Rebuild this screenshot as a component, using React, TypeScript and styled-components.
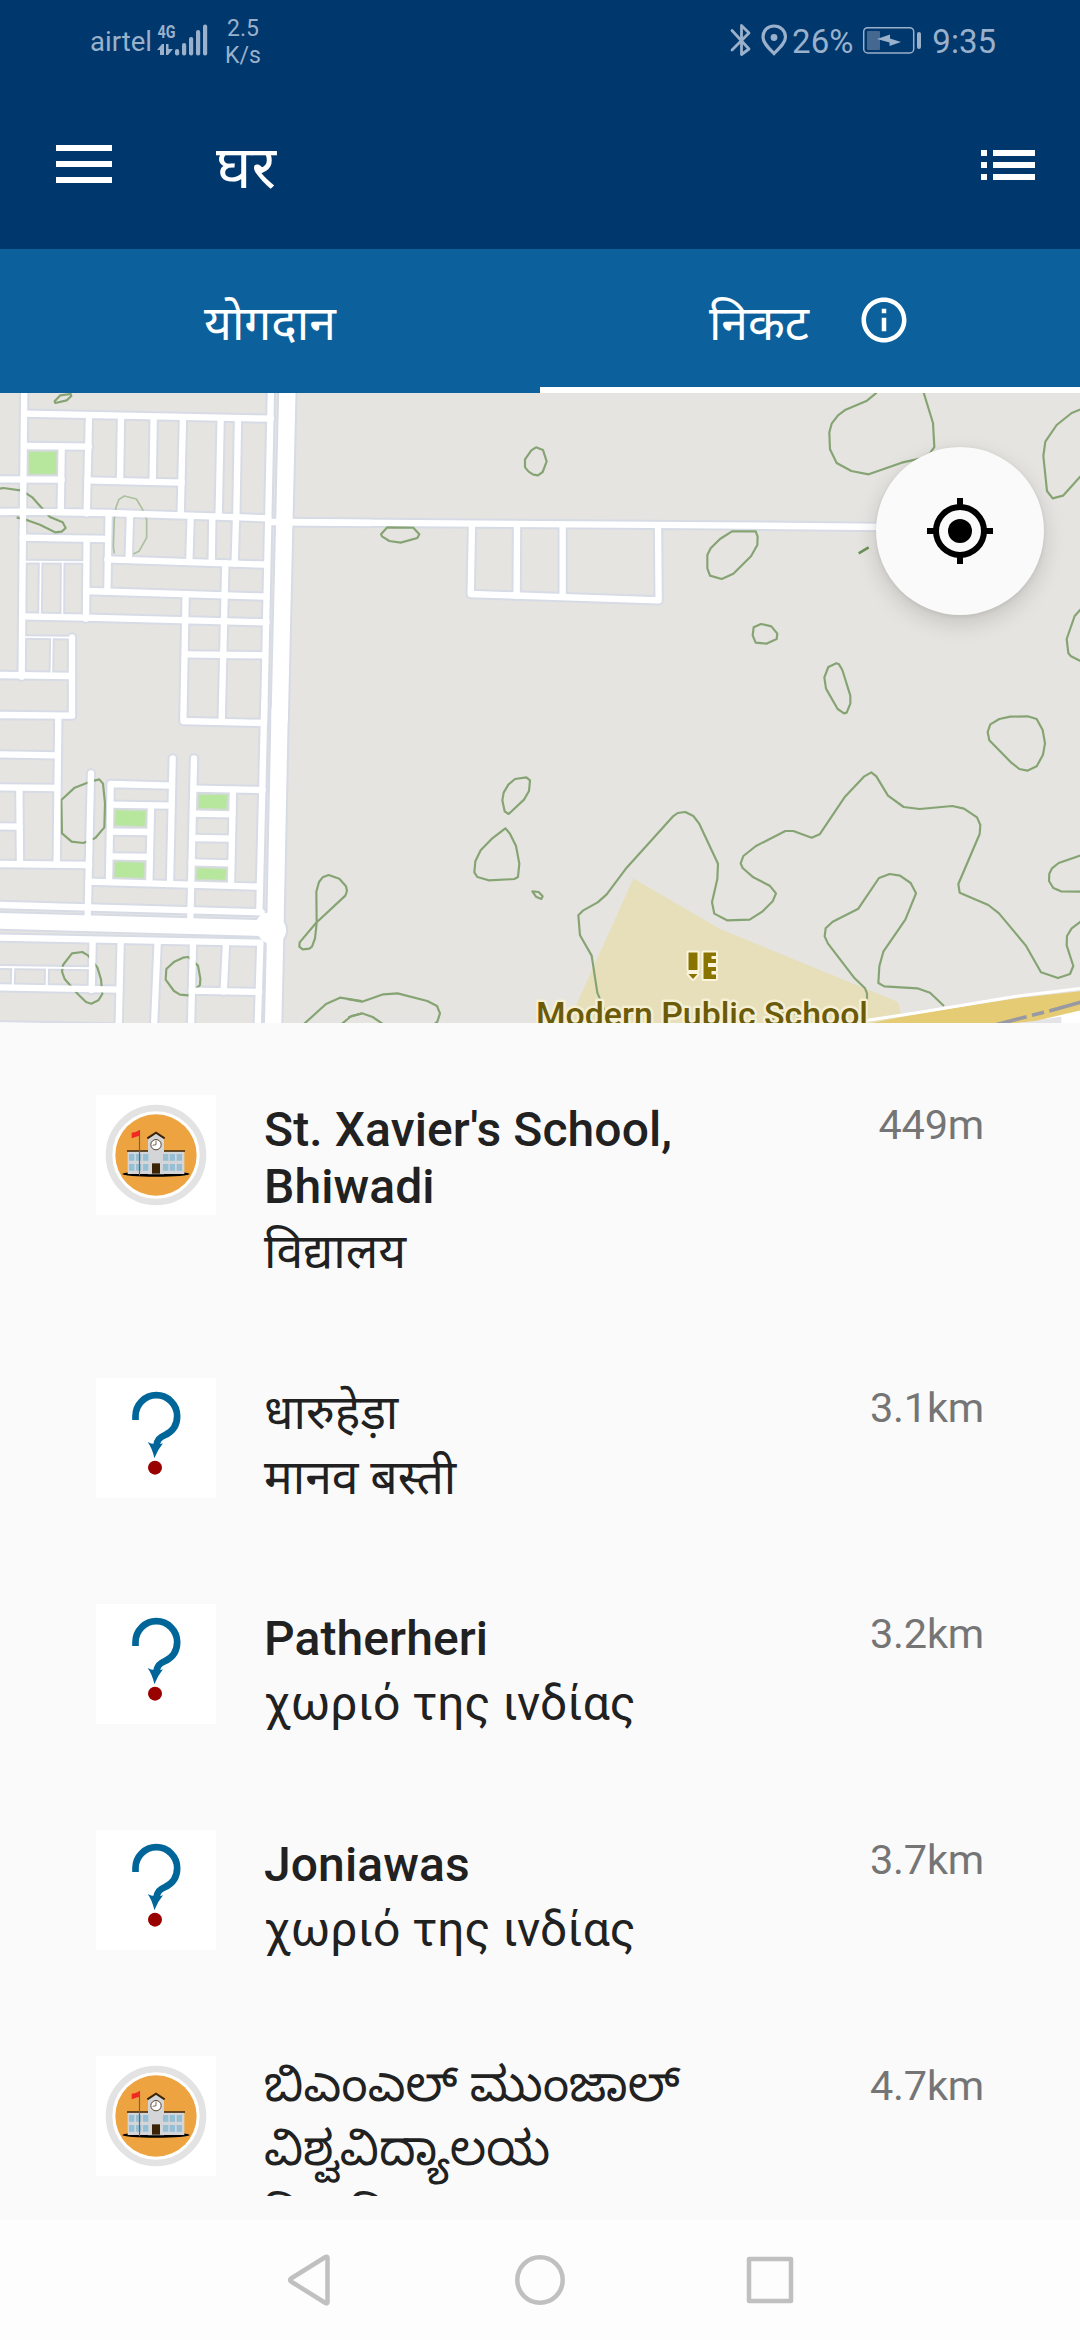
import React from "react";
import styled, { createGlobalStyle } from "styled-components";

const SANS = `Roboto, "Noto Sans", "Noto Sans Devanagari", "Noto Sans Kannada", sans-serif`;

const GlobalStyle = createGlobalStyle`
  * { box-sizing: border-box; }
  body { margin: 0; background: #fafafa; font-family: ${SANS}; }
`;

/* ---------- shell ---------- */

const Screen = styled.div`
  width: 1080px;
  height: 2340px;
  display: flex;
  flex-direction: column;
  overflow: hidden;
  background: #fafafa;
`;

const StatusBar = styled.div`
  height: 81px;
  flex: none;
  display: flex;
  justify-content: space-between;
  padding: 0 84px 0 90px;
  background: #00376c;
  color: #9ab0cb;
`;

const StatusGroup = styled.div`
  display: flex;
  align-items: flex-start;
`;

const Carrier = styled.span`
  font-size: 27.5px;
  line-height: 32px;
  margin: 26px 5px 0 0;
  width: 61px;
  white-space: nowrap;
`;

const Speed = styled.div`
  margin: 15px 0 0 17px;
  font-size: 23px;
  line-height: 27px;
  text-align: center;
  width: 36px;
`;

const StatusText = styled.span<{ $left?: number }>`
  font-size: 33px;
  line-height: 38px;
  margin: 23px 0 0 ${(p) => p.$left ?? 0}px;
  white-space: nowrap;
`;

const StatusGlyph = styled.svg<{ $left?: number }>`
  display: block;
  flex: none;
  margin: 22px 0 0 ${(p) => p.$left ?? 0}px;
`;

const AppBar = styled.header`
  height: 168px;
  flex: none;
  display: flex;
  align-items: center;
  padding: 0 45px 0 56px;
  background: #00376c;
  color: #fff;
`;

const BarIcon = styled.svg<{ $raise?: number }>`
  display: block;
  flex: none;
  margin-bottom: ${(p) => p.$raise ?? 0}px;
`;

const Title = styled.h1`
  flex: 1;
  margin: 5px 0 0 104px;
  font-size: 60px;
  line-height: 72px;
  font-weight: 400;
`;

const Tabs = styled.nav`
  height: 144px;
  flex: none;
  display: grid;
  grid-template-columns: 1fr 1fr;
  background: #0c609c;
`;

const Tab = styled.div<{ $active?: boolean }>`
  display: flex;
  align-items: center;
  justify-content: center;
  gap: 48px;
  padding-top: 6px;
  border-bottom: 6px solid ${(p) => (p.$active ? "#fff" : "transparent")};
  color: #fff;
  font-size: 48px;
  line-height: 56px;
`;

const TabLabel = styled.span`
  padding-top: 5px;
`;

/* ---------- map ---------- */

const MapArea = styled.section`
  position: relative;
  height: 630px;
  flex: none;
  background: #e5e4e0;
`;

const MapCanvas = styled.svg`
  display: block;
`;

const LocateButton = styled.button`
  position: absolute;
  top: 54px;
  right: 36px;
  width: 168px;
  height: 168px;
  border: 0;
  border-radius: 50%;
  padding: 0;
  display: flex;
  align-items: center;
  justify-content: center;
  background: #fafafa;
  box-shadow: 0 8px 22px rgba(0, 0, 0, 0.15), 0 1px 4px rgba(0, 0, 0, 0.08);
`;

type Road = { d: string; w?: number };

/* Map geometry is stored in thirds of a pixel, per map tile. */
const tiles = { nw: [0, 390], sw: [0, 710], n: [350, 390], ne: [710, 390], s: [350, 700], se: [710, 700] } as const;
type TileName = keyof typeof tiles;

const Tile = ({ at, children }: { at: TileName; children: React.ReactNode }) => (
  <g transform={`translate(${tiles[at][0]} ${tiles[at][1]}) scale(0.33333)`}>{children}</g>
);

const roads: Partial<Record<TileName, Road[]>> = {
  nw: [
    { d: "M73 -20L69 370L65 860" },
    { d: "M72 71L813 86" },
    { d: "M72 168L267 170" },
    { d: "M267 76L260 370" },
    { d: "M363 80L360 272" },
    { d: "M461 82L458 274" },
    { d: "M549 83L542 372" },
    { d: "M662 85L656 375" },
    { d: "M714 87L709 378" },
    { d: "M0 268L185 269" },
    { d: "M262 271L545 278" },
    { d: "M185 170L182 365" },
    { d: "M0 366L72 365L325 369L805 385" },
    { d: "M326 369L322 605" },
    { d: "M390 373L386 508" },
    { d: "M68 443L322 447" },
    { d: "M260 447L258 686" },
    { d: "M322 508L800 524" },
    { d: "M572 380L568 515" },
    { d: "M637 383L635 518" },
    { d: "M708 385L704 520" },
    { d: "M676 520L665 995" },
    { d: "M258 603L800 620" },
    { d: "M557 612L550 993L790 999" },
    { d: "M66 679L258 683L800 697" },
    { d: "M555 793L795 796" },
    { d: "M72 515L258 516", w: 4 },
    { d: "M122 515L120 680", w: 4 },
    { d: "M188 515L187 680", w: 4 },
    { d: "M72 741L210 743", w: 4 },
    { d: "M156 742L154 855", w: 4 },
    { d: "M216 742L216 977L0 975" },
    { d: "M0 855L216 858" },
    { d: "M813 -10L792 1000" },
    { d: "M860 -20L862 10L839 990", w: 48 },
    { d: "M860 396L1110 399" },
  ],
  sw: [
    { d: "M175 20L170 462" },
    { d: "M0 133L173 136" },
    { d: "M0 232L172 234" },
    { d: "M58 234L60 462" },
    { d: "M0 349L58 350" },
    { d: "M0 462L268 465" },
    { d: "M273 190L263 618" },
    { d: "M515 227L332 222L327 515" },
    { d: "M518 145L510 520" },
    { d: "M582 145L571 625" },
    { d: "M330 284L515 287" },
    { d: "M330 365L450 366" },
    { d: "M330 439L450 441" },
    { d: "M453 288L448 518" },
    { d: "M265 515L780 530" },
    { d: "M582 236L788 240" },
    { d: "M699 240L693 525" },
    { d: "M580 311L697 313" },
    { d: "M578 384L695 386" },
    { d: "M575 457L693 460" },
    { d: "M0 585L785 607" },
    { d: "M793 -20L778 605" },
    { d: "M0 683L781 698L773 950" },
    { d: "M278 690L275 840" },
    { d: "M362 695L356 950" },
    { d: "M473 697L462 950" },
    { d: "M579 700L573 950" },
    { d: "M678 700L671 845" },
    { d: "M0 832L358 839" },
    { d: "M575 842L778 846" },
    { d: "M0 771L275 775", w: 5 },
    { d: "M40 771L38 832", w: 5 },
    { d: "M141 773L140 835", w: 5 },
    { d: "M0 946L350 952" },
    { d: "M-30 632L812 655", w: 46 },
    { d: "M839 0L826 655L819 960", w: 48 },
    { d: "M808 650L816 660", w: 84 },
  ],
  n: [
    { d: "M-240 396L0 398L1110 406L1600 411" },
    { d: "M366 405L362 612L926 631L924 408" },
    { d: "M501 404L500 617" },
    { d: "M638 406L638 620" },
  ],
};

const contours: Partial<Record<TileName, string[]>> = {
  nw: [
    "M164 34L181 16L212 12L214 18L200 31L166 39Z",
    "M0 296L10 294L66 302L98 323L122 350L150 381L188 397L197 414L185 425L165 427L120 404L86 392L50 382",
  ],
  sw: [
    "M184 270L224 233L270 215L298 208L309 221L315 280L313 352L286 384L250 399L215 395L186 370Z",
    "M189 765L216 730L247 726L264 736L292 772L303 808L307 852L295 871L274 881L258 876L234 853L194 807L186 785Z",
    "M565 741L549 743L523 755L499 777L497 809L522 843L540 854L565 856L600 825L601 806L594 767Z",
    "M949 545L957 516L968 502L986 495L1018 506L1038 529L1041 543L1036 557L948 639L899 697L898 710L908 718L928 716L936 710L945 685L950 640Z",
    "M912 942L978 882L1020 863L1085 873",
    "M1025 942L1054 918L1085 911",
  ],
  n: [
    "M558 172L579 180L590 214L578 246L564 256L550 254L536 245L525 232L525 208L544 181Z",
    "M112 412L93 433L97 440L118 453L152 458L202 444L208 433L190 413Z",
  ],
  ne: [
    "M500 8L471 32L407 59L384 76L365 101L358 127L360 178L380 219L424 243L476 253L575 218L630 206L660 190L673 171L669 99L641 8",
    "M1115 57L1085 69L1040 105L1006 155L1000 198L1011 303L1028 325L1059 317L1115 255",
    "M66 424L30 447L2 475L-8 495L-8 535L0 557L35 567L70 551L123 499L142 465L143 440L137 424Z",
    "M131 712L153 702L184 709L202 731L200 747L169 761L137 758L128 736Z",
    "M343 862L355 831L379 820L387 823L397 840L421 917L421 941L410 968L402 970L383 957L348 896Z",
    "M1115 655L1094 678L1070 747L1075 789L1083 799L1115 815",
  ],
  s: [
    "M495 237L529 232L540 241L537 273L522 299L476 342L464 334L457 301L461 278L475 254Z",
    "M466 385L427 415L392 451L376 484L373 517L382 531L416 541L493 537L504 531L508 491L498 438L480 401Z",
    "M547 574L566 576L578 589L574 597L558 590Z",
    "M-10 897L36 905L100 883L143 880L232 903L261 918L270 940L262 965L250 975",
    "M-5 952L36 940L68 951L100 973",
    "M775 965L760 922L742 878L725 767L690 706L685 646L700 631L743 607L770 583L830 503L968 350L983 339L1006 336L1030 348L1047 370L1104 491L1102 537L1086 607L1093 641L1131 661L1199 659L1238 634L1268 604L1278 580L1259 557L1210 532L1178 504L1172 490L1180 468L1218 438L1306 393L1330 393L1385 413L1409 403L1485 290L1543 229L1564 217L1579 229L1614 287L1661 321L1709 327L1807 318L1842 326L1881 352L1891 375L1889 402L1825 552L1829 578L1915 615L1947 640L2027 736L2073 817L2124 834L2160 822L2170 798L2150 736L2151 708L2165 685L2195 663",
  ],
  se: [
    "M841 73L868 57L901 50L953 49L980 57L998 90L1005 130L999 164L980 199L952 212L928 207L904 188L838 121L833 96Z",
    "M1115 465L1046 489L1026 505L1018 521L1017 543L1030 564L1053 574L1115 575",
    "M471 960L471 880L465 865L434 835L354 731L344 709L347 685L368 665L445 626L507 534L539 522L570 527L602 549L618 580L586 659L520 755L508 799L505 849L523 859L622 865L660 878L702 918",
    "M190 965L190 945L215 937L250 938L265 948L258 966",
  ],
};

const ParkShapes = () => (
  <g fill="#b7e69d" stroke="#cfdccb" strokeWidth="4">
    <Tile at="nw"><path d="M86 184H170V253H86Z" /></Tile>
    <Tile at="sw">
      <path d="M346 299L438 302L436 350L344 347Z" />
      <path d="M344 454L434 457L432 505L342 502Z" />
      <path d="M596 252L683 254L681 298L594 295Z" />
      <path d="M591 473L679 476L677 511L588 508Z" />
    </Tile>
  </g>
);

const RoadLayer = ({ casing }: { casing?: boolean }) => (
  <g fill="none" stroke={casing ? "#d7dbe5" : "#fff"} strokeLinecap="round" strokeLinejoin="round">
    {(Object.keys(roads) as TileName[]).map((name) => (
      <Tile key={name} at={name}>
        {roads[name]!.map((r) => (
          <path key={r.d} d={r.d} strokeWidth={(r.w ?? 18) + (casing ? 13 : 1)} />
        ))}
      </Tile>
    ))}
  </g>
);

const MapView = () => (
  <MapCanvas width="1080" height="630" viewBox="0 393 1080 630">
    <path d="M633.5 878.5L720 929L898 1002L903 1023H568Z" fill="#e6dfba" />
    <RoadLayer casing />
    <ParkShapes />
    <g fill="none" stroke="#86a473" strokeWidth="6.5" strokeLinejoin="round">
      {(Object.keys(contours) as TileName[]).map((name) => (
        <Tile key={name} at={name}>
          {contours[name]!.map((d) => <path key={d} d={d} />)}
        </Tile>
      ))}
      <Tile at="nw">
        <path d="M343 490L340 470L343 385L348 352L357 328L373 318L409 327L426 355L440 388L440 443L417 484L400 492" stroke="#abc09d" strokeWidth="5" />
      </Tile>
      <Tile at="ne">
        <path d="M446 490L476 472" stroke="#6b9356" strokeWidth="8" />
      </Tile>
    </g>
    <RoadLayer />
    <Tile at="se">
      <path d="M470 975L930 968L1115 930V975Z" fill="#fff" />
      <path d="M920 969L1054 950V975H900Z" fill="#e3e3e8" />
      <path d="M455 975L640 938L910 896L1115 873V930L980 962L860 975Z" fill="#e5cb74" />
      <path d="M440 966L640 935L910 890L1115 865" fill="none" stroke="#fff" strokeWidth="9" />
      <path d="M855 975L950 950M966 946L1002 937M1018 933L1115 906" fill="none" stroke="#9899a3" strokeWidth="11" />
    </Tile>
    <g fill="#8a7400" stroke="#faf5dc" strokeWidth="4" paintOrder="stroke" strokeLinejoin="round">
      <path d="M688.5 952.5H697.5V970H688.5Z" />
      <path d="M688.5 974H697.5L693 979Z" />
      <path d="M703.5 952.5H716V956H711.5V959H716V963H708V967H716V971H711.5V974.5H716V979H703.5Z" />
    </g>
    <text
      x="536" y="1026" textLength="332" lengthAdjust="spacingAndGlyphs"
      fontFamily={SANS} fontSize="34" fontWeight="500" fill="#6b5a08"
      stroke="#f5efd3" strokeWidth="5" paintOrder="stroke" strokeLinejoin="round"
    >
      Modern Public School
    </text>
  </MapCanvas>
);

/* ---------- list ---------- */

const PlaceList = styled.main`
  height: 1173px;
  flex: none;
  overflow: hidden;
`;

const PlaceRow = styled.article`
  display: grid;
  grid-template-columns: 120px 1fr auto;
  column-gap: 48px;
  align-items: start;
  padding: 72px 96px 0;
`;

const Thumb = styled.svg`
  display: block;
  width: 120px;
  height: 120px;
  background: #fff;
`;

const PlaceText = styled.div`
  padding: 6px 0 26px;
  color: #212121;
  font-size: 48px;
`;

type Script = "latin" | "devanagari" | "kannada";

const Name = styled.h2<{ $script: Script }>`
  margin: ${(p) => (p.$script === "kannada" ? "-9px" : "0")} 0 0;
  max-width: 480px;
  font-size: inherit;
  font-weight: ${(p) => (p.$script === "latin" ? 500 : 400)};
  line-height: ${(p) => (p.$script === "kannada" ? 64 : 57)}px;
  letter-spacing: ${(p) => (p.$script === "latin" ? "0.1px" : "normal")};
`;

const Kind = styled.p`
  margin: 8px 0 0;
  line-height: 57px;
  white-space: nowrap;
`;

const Distance = styled.span`
  padding-top: 5px;
  font-size: 41.5px;
  line-height: 49px;
  letter-spacing: -0.2px;
  color: #757575;
`;

const windowXs = [99, 120, 141, 201, 221, 242];

const SchoolThumb = () => (
  <Thumb viewBox="0 0 360 360">
    <circle cx="180" cy="180" r="141" fill="#fff" stroke="#e3e3e3" strokeWidth="20" />
    <circle cx="180" cy="180" r="122" fill="#eda440" />
    <ellipse cx="180" cy="237" rx="101" ry="8.5" fill="#000" />
    <path d="M95 169H265V237H95Z" fill="#d3d5d8" />
    <path d="M93 165.500H267V170.500H93Z" fill="#3a2508" />
    <path d="M156 238V130L180 114L204 130V238Z" fill="#d3d5d8" />
    <path d="M154 130L180 113L206 130" fill="none" stroke="#3a2508" strokeWidth="6" />
    <circle cx="180" cy="149" r="15.500" fill="#fff" stroke="#5b452a" strokeWidth="3" />
    <path d="M180 137V149L170 151" fill="none" stroke="#5b452a" strokeWidth="2.500" />
    {windowXs.map((x) => (
      <path key={x} d={`M${x} 177h16v20h-16ZM${x} 207h16v20h-16Z`} fill="#94bfd4" />
    ))}
    <path d="M168 205H192V236H168Z" fill="#3b2306" />
    <path d="M130.500 105V241" stroke="#666" strokeWidth="3.500" />
    <path d="M107 113Q118 113 130 106V122Q118 126 107 130Z" fill="#f02a22" />
  </Thumb>
);

const UnknownThumb = () => (
  <Thumb viewBox="0 0 360 360">
    <path d="M118.500 126V114A62.500 62.500 0 0 1 243.500 114C243.500 140 232 160 206 172C190 179 184 184 181 204" fill="none" stroke="#00669a" strokeWidth="20" />
    <path d="M155 192Q165 198 176 198Q190 200 201 196Q186 214 175 241Q169 211 155 192Z" fill="#00669a" />
    <circle cx="177" cy="269" r="21" fill="#990000" />
  </Thumb>
);

type Place = { name: string; script: Script; kind: string; distance: string; school?: boolean };

const places: Place[] = [
  { name: "St. Xavier's School, Bhiwadi", script: "latin", kind: "विद्यालय", distance: "449m", school: true },
  { name: "धारुहेड़ा", script: "devanagari", kind: "मानव बस्ती", distance: "3.1km" },
  { name: "Patherheri", script: "latin", kind: "χωριό της ινδίας", distance: "3.2km" },
  { name: "Joniawas", script: "latin", kind: "χωριό της ινδίας", distance: "3.7km" },
  { name: "ಬಿಎಂಎಲ್ ಮುಂಜಾಲ್ ವಿಶ್ವವಿದ್ಯಾಲಯ", script: "kannada", kind: "विश्वविद्यालय", distance: "4.7km", school: true },
];

/* ---------- system navigation ---------- */

const NavBar = styled.footer`
  margin-top: 24px;
  height: 120px;
  flex: none;
  display: flex;
  align-items: center;
  justify-content: center;
  gap: 170px;
  background: #fdfdfd;
`;

const NavGlyph = styled.svg`
  display: block;
  fill: none;
  stroke: #c0c0c0;
  stroke-width: 4.5;
  stroke-linejoin: round;
`;

export default function App() {
  return (
    <>
      <GlobalStyle />
      <Screen>
        <StatusBar>
          <StatusGroup>
            <Carrier>airtel</Carrier>
            <StatusGlyph width="52" height="34" viewBox="156 22 52 34" fill="currentColor">
              <text x="157.500" y="38" fontFamily={SANS} fontSize="18.500" fontWeight="700" textLength="18" lengthAdjust="spacingAndGlyphs">4G</text>
              <path d="M157 50L162 44H164V55H160V50ZM166 44H168.500V49H173L168 55H166Z" />
              <rect x="175" y="49" width="4.200" height="6.500" rx="2" />
              <rect x="182" y="43" width="4.200" height="12.500" rx="2" />
              <rect x="189" y="37" width="4.200" height="18.500" rx="2" />
              <rect x="196" y="30" width="4.200" height="25.500" rx="2" />
              <rect x="203" y="24.500" width="4.200" height="31" rx="2" />
            </StatusGlyph>
            <Speed>2.5 K/s</Speed>
          </StatusGroup>
          <StatusGroup>
            <StatusGlyph width="22" height="36" viewBox="728 22 22 36" fill="none" stroke="currentColor" strokeWidth="2.800" strokeLinejoin="round" strokeLinecap="round">
              <path d="M731 30.500L748 49L740.500 54.500V25.500L748 33L731 50" />
            </StatusGlyph>
            <StatusGlyph $left={9} width="28" height="36" viewBox="759 22 28 36">
              <path d="M773 26C766.500 26 762 30.500 762 37C762 43 768 48.500 773 53.500C778 48.500 784.500 43 784.500 37C784.500 30.500 779.500 26 773 26Z" fill="none" stroke="currentColor" strokeWidth="3.200" />
              <circle cx="773" cy="37.500" r="3.400" fill="currentColor" />
            </StatusGlyph>
            <StatusText $left={4}>26%</StatusText>
            <StatusGlyph $left={9} width="60" height="36" viewBox="862 22 60 36">
              <rect x="863.700" y="27.700" width="50" height="25.300" rx="4" fill="none" stroke="currentColor" strokeWidth="1.500" />
              <rect x="867" y="31" width="13" height="19" rx="1" fill="#44688f" />
              <path d="M877 39L890 34.500V38.500L901 42L889.500 46V42.500Z" fill="currentColor" />
              <rect x="917" y="32" width="4" height="17" rx="2" fill="currentColor" />
            </StatusGlyph>
            <StatusText $left={10}>9:35</StatusText>
          </StatusGroup>
        </StatusBar>

        <AppBar>
          <BarIcon $raise={2} width="56" height="38" viewBox="0 0 56 38" fill="#fff">
            <path d="M0 0H56V6H0ZM0 16H56V22H0ZM0 32H56V38H0Z" />
          </BarIcon>
          <Title>घर</Title>
          <BarIcon width="54" height="30" viewBox="0 0 54 30" fill="#fff">
            <path d="M0 0h6v6h-6ZM12 0h42v6H12ZM0 12h6v6h-6ZM12 12h42v6H12ZM0 24h6v6h-6ZM12 24h42v6H12Z" />
          </BarIcon>
        </AppBar>

        <Tabs>
          <Tab><TabLabel>योगदान</TabLabel></Tab>
          <Tab $active>
            <TabLabel>निकट</TabLabel>
            <BarIcon $raise={3} width="54" height="54" viewBox="0 0 24 24" fill="#fff">
              <path d="M11 7h2v2h-2zm0 4h2v6h-2zm1-9C6.480 2 2 6.480 2 12s4.480 10 10 10 10-4.480 10-10S17.520 2 12 2zm0 18c-4.410 0-8-3.590-8-8s3.590-8 8-8 8 3.590 8 8-3.590 8-8 8z" />
            </BarIcon>
          </Tab>
        </Tabs>

        <MapArea>
          <MapView />
          <LocateButton aria-label="Locate">
            <svg width="66" height="66" viewBox="0 0 66 66">
              <circle cx="33" cy="33" r="24" fill="none" stroke="#000" strokeWidth="6" />
              <circle cx="33" cy="33" r="12" />
              <path d="M30 0h6v8h-6ZM30 58h6v8h-6ZM0 30h8v6H0ZM58 30h8v6h-8Z" />
            </svg>
          </LocateButton>
        </MapArea>

        <PlaceList>
          {places.map((p) => (
            <PlaceRow key={p.name}>
              {p.school ? <SchoolThumb /> : <UnknownThumb />}
              <PlaceText>
                <Name $script={p.script}>{p.name}</Name>
                <Kind>{p.kind}</Kind>
              </PlaceText>
              <Distance>{p.distance}</Distance>
            </PlaceRow>
          ))}
        </PlaceList>

        <NavBar>
          <NavGlyph width="60" height="60" viewBox="0 0 60 60"><path d="M47.500 8V52Q47.500 54 45.500 53L11 31.500Q9 30 11 28.500L45.500 7Q47.500 6 47.500 8Z" /></NavGlyph>
          <NavGlyph width="60" height="60" viewBox="0 0 60 60"><circle cx="30" cy="30" r="22.700" /></NavGlyph>
          <NavGlyph width="60" height="60" viewBox="0 0 60 60"><path d="M9 9H51V51H9Z" /></NavGlyph>
        </NavBar>
      </Screen>
    </>
  );
}
